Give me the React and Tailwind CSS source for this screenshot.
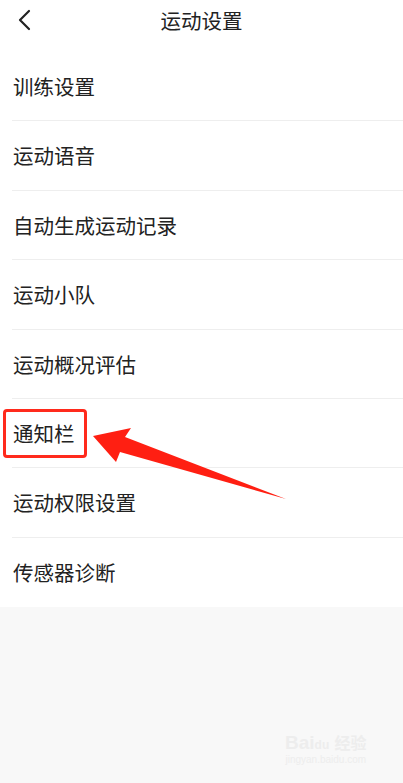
import React from 'react';

const items = [
  '训练设置',
  '运动语音',
  '自动生成运动记录',
  '运动小队',
  '运动概况评估',
  '通知栏',
  '运动权限设置',
  '传感器诊断',
];

const App = () => {
  return (
    <div
      className="relative w-[403px] h-[783px] bg-[#f8f8f8] overflow-hidden"
      style={{ fontFamily: '"Noto Sans CJK SC", "Noto Sans", sans-serif' }}
    >
      <div className="bg-white">
        {/* header */}
        <div className="relative h-[40px] flex items-center justify-center">
          <button className="absolute left-[14px] top-[8px] w-[20px] h-[24px] flex items-center justify-center">
            <svg width="14" height="22" viewBox="0 0 14 22" fill="none">
              <path d="M12 2 L3 11 L12 20" stroke="#222" strokeWidth="2.2" strokeLinecap="round" strokeLinejoin="round" />
            </svg>
          </button>
          <h1 className="text-[20.5px] text-[#222] leading-none">运动设置</h1>
        </div>

        {/* list */}
        <div className="mt-[12px] pl-[12px]">
          {items.map((item, i) => (
            <div
              key={item}
              className={`h-[69.4px] flex items-center pl-[1px] ${i < items.length - 1 ? 'border-b border-[#eeeeee]' : ''}`}
            >
              <span className="text-[20.5px] text-[#222] leading-none">{item}</span>
            </div>
          ))}
        </div>
      </div>

      {/* highlight box */}
      <div className="absolute left-[3px] top-[409px] w-[84px] h-[49px] border-[3px] border-[#ff2a1c] rounded-[4px]" />

      {/* arrow */}
      <svg className="absolute left-0 top-0 pointer-events-none" width="403" height="783" viewBox="0 0 403 783">
        <polygon points="93,436 131,428 125,437 286,499 120,452 116,462" fill="#ff1f12" />
      </svg>

      {/* watermark */}
      <div className="absolute left-[285px] top-[733px] flex flex-col items-center text-[#ededed] leading-none">
        <span className="text-[19px] font-bold" style={{ fontFamily: '"Liberation Sans", sans-serif' }}>
          Bai<span className="text-[12px]">du</span> <span className="text-[16px]" style={{ fontFamily: '"Noto Sans CJK SC", sans-serif' }}>经验</span>
        </span>
        <span className="text-[10px] mt-[3px]" style={{ fontFamily: '"Liberation Sans", sans-serif' }}>jingyan.baidu.com</span>
      </div>
    </div>
  );
};

export default App;
